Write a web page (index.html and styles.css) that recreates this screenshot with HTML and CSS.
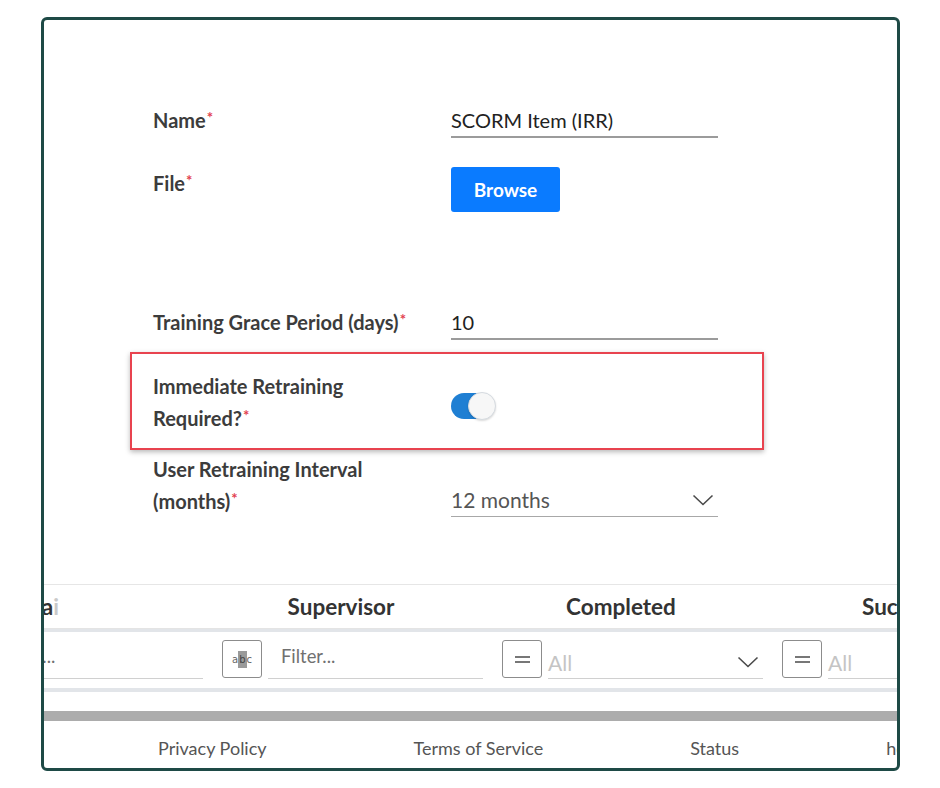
FILE: index.html
```html
<!DOCTYPE html>
<html>
<head>
<meta charset="utf-8">
<link rel="stylesheet" href="styles.css">
</head>
<body>
<div class="frame">
  <div class="form">
    <div class="row row-name">
      <div class="label">Name<span class="req">*</span></div>
      <div class="field text-field">SCORM Item (IRR)</div>
    </div>
    <div class="row row-file">
      <div class="label">File<span class="req">*</span></div>
      <div><button class="browse">Browse</button></div>
    </div>
    <div class="row row-grace">
      <div class="label">Training Grace Period (days)<span class="req">*</span></div>
      <div class="field text-field">10</div>
    </div>
    <div class="highlight">
      <div class="row row-toggle">
        <div class="label">Immediate Retraining<br>Required?<span class="req">*</span></div>
        <div class="toggle"><span class="knob"></span></div>
      </div>
    </div>
    <div class="row row-interval">
      <div class="label">User Retraining Interval<br>(months)<span class="req">*</span></div>
      <div class="field select-field">
        <span>12 months</span>
        <svg class="chev" width="22" height="12" viewBox="0 0 22 12"><path d="M1.5 1.5 L11 10.5 L20.5 1.5" fill="none" stroke="#4a4a4a" stroke-width="1.6"/></svg>
      </div>
    </div>
  </div>

  <div class="grid">
    <div class="grid-head">
      <div class="hcell first">Tra<span class="fade">i</span></div>
      <div class="hcell">Supervisor</div>
      <div class="hcell">Completed</div>
      <div class="hcell">Success</div>
    </div>
    <div class="grid-filter">
      <div class="fcell">
        <span class="opbox abc">a<span class="b">b</span>c</span>
        <span class="finput">Filter...</span>
      </div>
      <div class="fcell">
        <span class="opbox abc">a<span class="b">b</span>c</span>
        <span class="finput">Filter...</span>
      </div>
      <div class="fcell">
        <span class="opbox eq"><span class="eqline"></span><span class="eqline"></span></span>
        <span class="fselect"><span>All</span>
          <svg class="chev" width="22" height="12" viewBox="0 0 22 12"><path d="M1.5 1.5 L11 10.5 L20.5 1.5" fill="none" stroke="#4a4a4a" stroke-width="1.6"/></svg>
        </span>
      </div>
      <div class="fcell">
        <span class="opbox eq"><span class="eqline"></span><span class="eqline"></span></span>
        <span class="fselect"><span>All</span>
          <svg class="chev" width="22" height="12" viewBox="0 0 22 12"><path d="M1.5 1.5 L11 10.5 L20.5 1.5" fill="none" stroke="#4a4a4a" stroke-width="1.6"/></svg>
        </span>
      </div>
    </div>
    <div class="scrollbar"></div>
  </div>

  <div class="footer">
    <span>Privacy Policy</span>
    <span>Terms of Service</span>
    <span>Status</span>
    <span>help</span>
  </div>
</div>
</body>
</html>
```
FILE: styles.css
```css
* { box-sizing: border-box; }
html, body { margin: 0; padding: 0; background: #fff; }
body { font-family: Lato, "Open Sans", sans-serif; color: #3a3a3a; }

.frame {
  margin: 17px 0 0 41px;
  width: 859px;
  height: 754px;
  border: 3px solid #1e4a46;
  border-radius: 6px;
  overflow: hidden;
  position: relative;
}

.form { padding: 84px 0 0 109px; }

.row {
  display: grid;
  grid-template-columns: 298px 267px;
  align-items: center;
}
.label {
  font-size: 20px;
  font-weight: 700;
  line-height: 32px;
  color: #3c3c3c;
}
.req {
  color: #e2404f;
  font-size: 15px;
  position: relative;
  top: -5px;
  margin-left: 1px;
}
.field { font-size: 20px; color: #222; }
.text-field {
  height: 34px;
  line-height: 32px;
  border-bottom: 2px solid #9b9b9b;
}
.row-name { height: 34px; }
.row-file { margin-top: 29px; align-items: start; height: 45px; }
.browse {
  width: 109px;
  height: 45px;
  background: #0a7bff;
  color: #fff;
  border: 0;
  border-radius: 3px;
  font-family: Lato, sans-serif;
  font-weight: 700;
  font-size: 19px;
  padding: 0;
}
.row-grace { margin-top: 94px; height: 34px; }

.highlight {
  margin: 12px 0 0 -23px;
  width: 634px;
  height: 98px;
  border: 2px solid #e8434f;
  box-shadow: 0 2px 5px rgba(0,0,0,0.28);
  padding: 16px 0 0 21px;
}
.toggle {
  width: 44px;
  height: 26px;
  margin-top: 6px;
  border-radius: 13px;
  background: #1f7fd3;
  position: relative;
}
.knob {
  position: absolute;
  right: -1px;
  top: -1px;
  width: 28px;
  height: 28px;
  border-radius: 50%;
  background: #f7f7f7;
  border: 1px solid #d6dbe0;
  box-shadow: 0 1px 2px rgba(0,0,0,0.15);
}

.row-interval { margin-top: 3px; align-items: end; }
.select-field {
  height: 34px;
  line-height: 34px;
  font-size: 21px;
  border-bottom: 1px solid #a8a8a8;
  color: #555;
  display: flex;
  justify-content: space-between;
  align-items: center;
  padding-right: 4px;
  margin-bottom: 2px;
}

.grid {
  margin-top: 65px;
  border-top: 1px solid #e6e6e6;
}
.grid-head, .grid-filter {
  display: flex;
  margin-left: -112px;
}
.grid-head { height: 44px; border-bottom: 1px solid #e4e4e4; }
.grid-filter {
  border-top: 3px solid #e2e5e9;
  border-bottom: 4px solid #e2e5e9;
  height: 63px;
}
.hcell {
  flex: 0 0 280px;
  text-align: center;
  padding-right: 22px;
  font-size: 22.5px;
  font-weight: 700;
  line-height: 44px;
  color: #333;
  white-space: nowrap;
  overflow: hidden;
}
.hcell.first { text-align: right; padding-right: 153px; }
.fade { color: #c9c9c9; }

.fcell {
  flex: 0 0 280px;
  display: flex;
  align-items: flex-start;
  padding: 8px 9px 0 10px;
  gap: 6px;
}
.opbox {
  flex: 0 0 40px;
  height: 38px;
  border: 1px solid #8c8c8c;
  border-radius: 3px;
  display: flex;
  align-items: center;
  justify-content: center;
}
.abc { font-size: 10px; color: #666; font-family: "DejaVu Sans", sans-serif; }
.abc .b { background: #9a9a9a; color: #444; padding: 3px 1px; }
.eq { flex-direction: column; gap: 3px; }
.eqline { display: block; width: 15px; height: 2px; background: #777; }
.finput {
  flex: 1;
  height: 39px;
  padding: 4px 0 0 13px;
  font-size: 18.4px;
  line-height: 24px;
  color: #707070;
  border-bottom: 1px solid #d0d0d0;
}
.fselect {
  flex: 1;
  height: 39px;
  border-bottom: 1px solid #d0d0d0;
  display: flex;
  justify-content: space-between;
  align-items: center;
  padding: 6px 4px 0 0;
  font-size: 21px;
  color: #c4c4c4;
}
.scrollbar {
  margin-top: 19px;
  height: 10px;
  background: #acacac;
}

.footer {
  display: flex;
  gap: 147px;
  padding: 16px 0 0 114px;
  font-size: 18px;
  line-height: 22px;
  color: #555;
  white-space: nowrap;
}
```
